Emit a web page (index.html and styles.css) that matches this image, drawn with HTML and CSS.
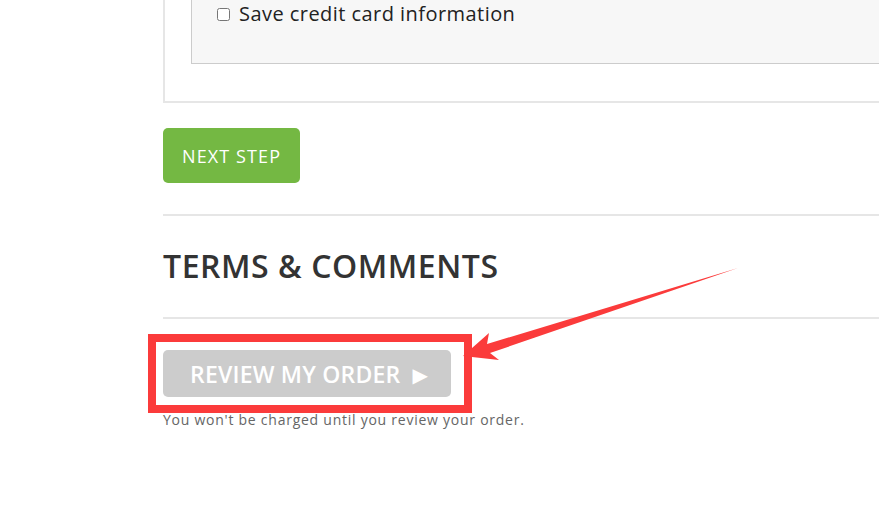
FILE: index.html
```html
<!DOCTYPE html>
<html lang="en">
<head>
<meta charset="UTF-8">
<meta name="viewport" content="width=device-width, initial-scale=1.0">
<title>Checkout</title>
<link rel="stylesheet" href="styles.css">
</head>
<body>

<div class="checkout">
  <!-- payment step (scrolled, top is out of view) -->
  <div class="payment-step">
    <div class="card-box">
      <label class="save-card">
        <input type="checkbox" id="saveCard">
        <span>Save credit card information</span>
      </label>
    </div>
  </div>

  <button type="button" class="btn-next">NEXT STEP</button>

  <hr class="divider">

  <h2 class="section-title">TERMS &amp; COMMENTS</h2>

  <hr class="divider">

  <button type="button" class="btn-review" disabled>REVIEW MY ORDER <span class="play">&#9654;</span></button>
  <p class="note">You won't be charged until you review your order.</p>
</div>

<!-- annotation layer -->
<svg class="annotation" width="879" height="507" viewBox="0 0 879 507">
  <rect x="152" y="338" width="316" height="71" fill="none" stroke="#fb3b3b" stroke-width="8"/>
  <polygon fill="#fb3b3b" points="463,356 489,333 487,344 738,268 490,353 499,360"/>
</svg>

</body>
</html>
```

FILE: styles.css
```css
body {
    margin: 0;
    font-family: "Open Sans", "Liberation Sans", Arial, sans-serif;
    background-color: #ffffff;
    color: #333;
    overflow: hidden;
}

.checkout {
    padding-left: 163px;
}

/* payment step box */
.payment-step {
    border-left: 2px solid #e6e6e6;
    border-bottom: 2px solid #e6e6e6;
    padding: 0 0 37px 26px;
}

.card-box {
    background-color: #f7f7f7;
    border-left: 1px solid #cccccc;
    border-bottom: 1px solid #cccccc;
    height: 63px;
    padding-left: 21px;
}

.save-card {
    display: flex;
    align-items: center;
    padding-top: 1px;
    font-size: 20px;
    line-height: 26px;
    letter-spacing: 0.45px;
    color: #222;
}

.save-card input {
    margin: 0 9px 0 4px;
    width: 13px;
    height: 13px;
}

.btn-next {
    display: block;
    margin-top: 25px;
    height: 55px;
    padding: 0 19px;
    border: none;
    border-radius: 5px;
    background-color: #74b843;
    color: #ffffff;
    font-family: inherit;
    font-size: 18px;
    letter-spacing: 1.1px;
    cursor: pointer;
}

.divider {
    margin: 31px 0 0;
    border: none;
    border-top: 2px solid #e6e6e6;
}

.section-title {
    margin: 30px 0 31px;
    font-size: 32px;
    line-height: 40px;
    font-weight: 600;
    letter-spacing: 0.55px;
    color: #333;
}

.section-title + .divider {
    margin-top: 0;
}

.btn-review {
    display: block;
    margin-top: 31px;
    width: 288px;
    height: 47px;
    padding: 0 0 0 27px;
    text-align: left;
    border: none;
    border-radius: 5px;
    background-color: #cccccc;
    color: #ffffff;
    font-family: inherit;
    font-size: 23px;
    font-weight: 600;
    letter-spacing: 0.2px;
}

.btn-review .play {
    font-size: 20px;
    margin-left: 6px;
    font-family: "DejaVu Sans", sans-serif;
    vertical-align: 1px;
}

.note {
    margin: 13px 0 0;
    font-size: 14px;
    line-height: 20px;
    letter-spacing: 0.75px;
    color: #666;
}

.annotation {
    position: absolute;
    top: 0;
    left: 0;
    pointer-events: none;
}
```
